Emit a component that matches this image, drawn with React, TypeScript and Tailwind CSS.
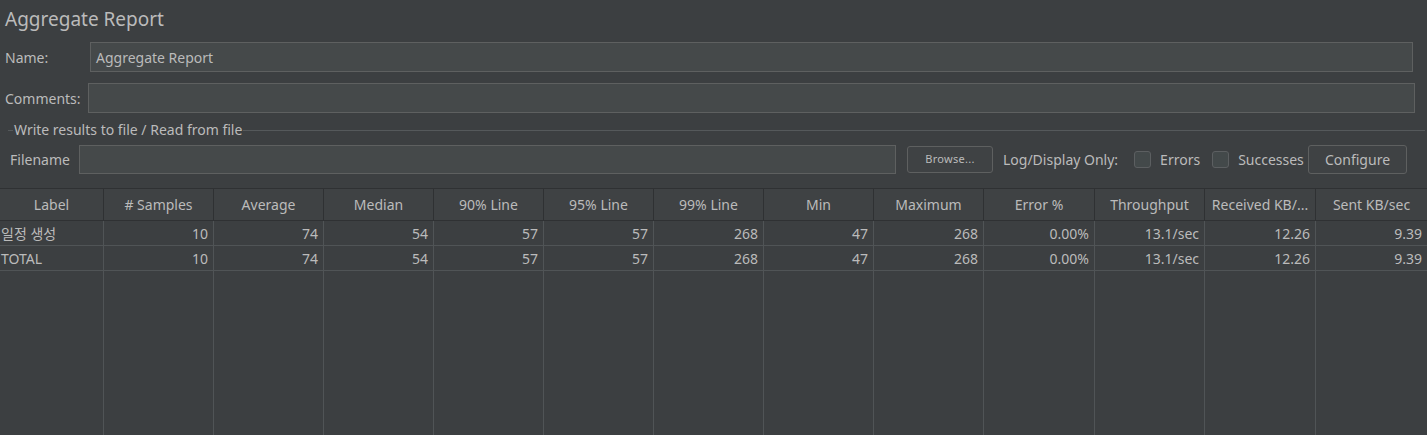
import React from "react";

const columns = [
  { name: "Label", w: "w-[104px]" },
  { name: "# Samples", w: "w-[110px]" },
  { name: "Average", w: "w-[110px]" },
  { name: "Median", w: "w-[110px]" },
  { name: "90% Line", w: "w-[110px]" },
  { name: "95% Line", w: "w-[110px]" },
  { name: "99% Line", w: "w-[110px]" },
  { name: "Min", w: "w-[110px]" },
  { name: "Maximum", w: "w-[110px]" },
  { name: "Error %", w: "w-[111px]" },
  { name: "Throughput", w: "w-[110px]" },
  { name: "Received KB/...", w: "w-[111px]" },
  { name: "Sent KB/sec", w: "flex-1" },
];

const rows = [
  ["일정 생성", "10", "74", "54", "57", "57", "268", "47", "268", "0.00%", "13.1/sec", "12.26", "9.39"],
  ["TOTAL", "10", "74", "54", "57", "57", "268", "47", "268", "0.00%", "13.1/sec", "12.26", "9.39"],
];

const font = "font-['Noto_Sans','Noto_Sans_CJK_KR',sans-serif]";

const Checkbox: React.FC<{ label: string }> = ({ label }) => (
  <label className="flex items-center gap-[9px]">
    <span className="w-[17px] h-[17px] rounded-[3px] border border-[#5c5f61] bg-[#43494a]" />
    <span>{label}</span>
  </label>
);

export default function App() {
  return (
    <div className={`w-[1427px] h-[435px] bg-[#3c3f41] text-[#bbbbbb] text-[14px] overflow-hidden flex flex-col ${font}`}>
      <div className="pl-[5px] pt-[6px] h-[42px] text-[19px] leading-[26px]">Aggregate Report</div>

      <div className="flex items-center h-[30px] pl-[5px] pr-[14px]">
        <span className="w-[85px]">Name:</span>
        <div className="flex-1 h-[30px] bg-[#45494a] border border-[#5e6060] px-[5px] flex items-center">
          Aggregate Report
        </div>
      </div>

      <div className="flex items-center h-[30px] mt-[11px] pl-[5px] pr-[12px]">
        <span className="w-[83px]">Comments:</span>
        <div className="flex-1 h-[30px] bg-[#45494a] border border-[#5e6060]" />
      </div>

      <div className="flex items-center mt-[8px] h-[18px] pl-[8px] pr-[2px]">
        <span className="w-[5px] border-t border-[#55595b]" />
        <span className="px-[1px] leading-[18px]">Write results to file / Read from file</span>
        <span className="flex-1 border-t border-[#55595b]" />
      </div>

      <div className="flex items-center h-[29px] mt-[6px] pl-[10px] pr-[20px]">
        <span className="w-[69px]">Filename</span>
        <div className="w-[817px] h-[29px] bg-[#45494a] border border-[#5e6060]" />
        <button className="ml-[11px] w-[86px] h-[27px] rounded-[3px] border border-[#5e6060] bg-[#3f4244] text-[11px] tracking-[0.3px]">
          Browse...
        </button>
        <span className="ml-[10px]">Log/Display Only:</span>
        <div className="ml-[16px] flex items-center gap-[12px]">
          <Checkbox label="Errors" />
          <Checkbox label="Successes" />
        </div>
        <button className="ml-auto w-[99px] h-[29px] rounded-[3px] border border-[#5e6060] bg-[#3f4244]">
          Configure
        </button>
      </div>

      <div className="mt-[14px] flex-1 flex flex-col">
        <div className="flex h-[33px] bg-[#3f4244] border-y border-[#2f3133]">
          {columns.map((c, i) => (
            <div
              key={c.name}
              className={`${c.w} flex items-center justify-center whitespace-nowrap ${i < columns.length - 1 ? "border-r border-[#2f3133]" : ""}`}
            >
              {c.name}
            </div>
          ))}
        </div>
        <div className="flex-1 flex">
          {columns.map((c, i) => (
            <div
              key={c.name}
              className={`${c.w} flex flex-col ${i < columns.length - 1 ? "border-r border-[#505456]" : ""}`}
            >
              {rows.map((r, j) => (
                <div
                  key={j}
                  className={`h-[25px] flex items-center border-b border-[#505456] whitespace-nowrap ${i === 0 ? "justify-start pl-[1px]" : "justify-end pr-[5px]"}`}
                >
                  {r[i]}
                </div>
              ))}
            </div>
          ))}
        </div>
      </div>
    </div>
  );
}
